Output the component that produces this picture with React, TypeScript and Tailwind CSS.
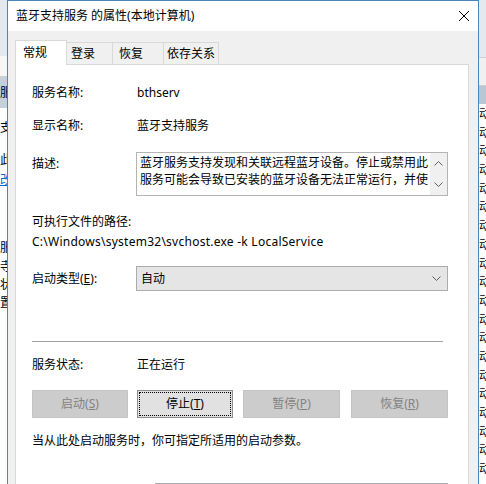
import React from "react";

const FONT = "font-['Noto_Sans','Noto_Sans_CJK_SC',sans-serif]";

function Chevron({ dir, className }: { dir: "up" | "down"; className?: string }) {
  return (
    <svg width="9" height="5" viewBox="0 0 9 5" className={className}>
      {dir === "up" ? (
        <polyline points="0.5,4.5 4.5,0.5 8.5,4.5" fill="none" stroke="#606060" strokeWidth="1" />
      ) : (
        <polyline points="0.5,0.5 4.5,4.5 8.5,0.5" fill="none" stroke="#606060" strokeWidth="1" />
      )}
    </svg>
  );
}

function LeftStrip() {
  return (
    <div className="w-[7px] shrink-0 overflow-hidden flex flex-col bg-white leading-[20px]">
      <div className="h-[56px] bg-[#e4e9ef]" />
      <div className="h-[21px] bg-[#f6f6f6] border-b border-[#cfcfcf]" />
      <div className="h-[31px] bg-[#c4d0dc] leading-[31px] whitespace-nowrap">服</div>
      <div className="h-[10px]" />
      <div className="h-[20px] whitespace-nowrap">支</div>
      <div className="h-[12px]" />
      <div className="h-[20px] whitespace-nowrap">此</div>
      <div className="h-[20px] whitespace-nowrap text-[#0066cc] underline">改</div>
      <div className="h-[48px]" />
      <div className="h-[20px] whitespace-nowrap">服</div>
      <div className="h-[18px] leading-[18px] whitespace-nowrap">寺</div>
      <div className="h-[18px] leading-[18px] whitespace-nowrap">状</div>
      <div className="h-[18px] leading-[18px] whitespace-nowrap">置</div>
    </div>
  );
}

function RightStrip() {
  const rows = Array.from({ length: 20 });
  return (
    <div className="w-[7px] shrink-0 overflow-hidden flex flex-col bg-white">
      <div className="h-[57px] shrink-0 bg-[#e4e9ef]" />
      <div className="h-[29px] shrink-0 bg-[#f0f0f0] border-y border-[#cfcfcf]" />
      <div className="h-[18px] shrink-0 bg-[#b9c6d4]" />
      {rows.map((_, i) => (
        <div key={i} className="h-[18.7px] shrink-0 leading-[19px] whitespace-nowrap">
          动
        </div>
      ))}
    </div>
  );
}

function Label({ children, w = "w-[105px]" }: { children: React.ReactNode; w?: string }) {
  return <span className={`${w} shrink-0`}>{children}</span>;
}

function Btn({
  children,
  disabled,
  focused,
  className = "",
}: {
  children: React.ReactNode;
  disabled?: boolean;
  focused?: boolean;
  className?: string;
}) {
  const base = "h-[28px] flex items-center justify-center border shrink-0";
  const look = disabled
    ? "bg-[#cccccc] border-[#c4c4c4] text-[#838383]"
    : "bg-[#e1e1e1] border-[#8f8f8f] text-black";
  const focus = focused ? "outline outline-1 outline-dotted outline-black outline-offset-[-3px]" : "";
  return <div className={`${base} ${look} ${focus} ${className}`}>{children}</div>;
}

function Panel() {
  return (
    <div className="flex-1 bg-white border-x border-[#d9d9d9] pl-[16px] pt-[18px] flex flex-col">
      <div className="flex h-[20px] items-center">
        <Label>服务名称:</Label>
        <span>bthserv</span>
      </div>
      <div className="flex h-[20px] items-center mt-[13px]">
        <Label>显示名称:</Label>
        <span>蓝牙支持服务</span>
      </div>
      <div className="flex mt-[16px]">
        <span className="w-[104px] shrink-0 pt-[2px] leading-[20px]">描述:</span>
        <div className="w-[312px] h-[44px] border border-[#b4b4b4] bg-white flex">
          <div className="flex-1 pl-[3px] pt-px leading-[17px] overflow-hidden whitespace-nowrap">
            <div>蓝牙服务支持发现和关联远程蓝牙设备。停止或禁用此</div>
            <div>服务可能会导致已安装的蓝牙设备无法正常运行，并使</div>
          </div>
          <div className="w-[17px] bg-[#f0f0f0] flex flex-col items-center justify-between py-[8px]">
            <Chevron dir="up" />
            <Chevron dir="down" />
          </div>
        </div>
      </div>
      <div className="h-[20px] flex items-center mt-[16px]">可执行文件的路径:</div>
      <div className="h-[20px] flex items-center whitespace-nowrap tracking-[0.25px]">
        C:\Windows\system32\svchost.exe -k LocalService
      </div>
      <div className="flex items-center mt-[14px] h-[25px]">
        <span className="w-[104px] shrink-0">
          启动类型(<span className="underline">E</span>):
        </span>
        <div className="w-[312px] h-[25px] bg-[#e5e5e5] border border-[#acacac] flex items-center justify-between pl-[4px] pr-[6px]">
          <span>自动</span>
          <Chevron dir="down" />
        </div>
      </div>
      <div className="mt-[50px] h-px w-[411px] bg-[#a0a0a0]" />
      <div className="flex h-[20px] items-center mt-[13px]">
        <Label>服务状态:</Label>
        <span>正在运行</span>
      </div>
      <div className="flex mt-[15px]">
        <Btn disabled className="w-[96px]">
          启动(<span className="underline">S</span>)
        </Btn>
        <Btn focused className="w-[96px] ml-[9px]">
          停止(<span className="underline">T</span>)
        </Btn>
        <Btn disabled className="w-[97px] ml-[10px]">
          暂停(<span className="underline">P</span>)
        </Btn>
        <Btn disabled className="w-[97px] ml-[11px]">
          恢复(<span className="underline">R</span>)
        </Btn>
      </div>
      <div className="h-[20px] flex items-center mt-[13px] whitespace-nowrap">
        当从此处启动服务时，你可指定所适用的启动参数。
      </div>
      <div className="mt-[32px] ml-[123px] w-[293px] h-[20px] border border-[#abadb3] bg-white shrink-0" />
    </div>
  );
}

function Tabs() {
  return (
    <div className="flex items-end h-[25px]">
      <div className="h-[25px] w-[52px] bg-white border-l border-t border-r border-[#d9d9d9] pl-[7px] leading-[23px] relative">
        常规
      </div>
      <div className="h-[23px] w-[46px] border-t border-r border-b border-[#d9d9d9] pl-[4px] leading-[22px]">登录</div>
      <div className="h-[23px] w-[51px] border-t border-r border-b border-[#d9d9d9] pl-[6px] leading-[22px]">恢复</div>
      <div className="h-[23px] w-[55px] border-t border-r border-b border-[#d9d9d9] pl-[3px] leading-[22px]">依存关系</div>
      <div className="flex-1 h-[23px] border-b border-[#d9d9d9]" />
    </div>
  );
}

function Dialog() {
  return (
    <div className="flex-1 border-x border-t border-[#4a86b8] bg-[#f0f0f0] flex flex-col min-w-0">
      <div className="h-[30px] shrink-0 bg-white flex items-center justify-between pl-[8px] pr-[9px]">
        <span className="whitespace-nowrap">蓝牙支持服务 的属性(本地计算机)</span>
        <svg width="10" height="10" viewBox="0 0 10 10">
          <line x1="0" y1="0" x2="10" y2="10" stroke="#000" strokeWidth="1" />
          <line x1="10" y1="0" x2="0" y2="10" stroke="#000" strokeWidth="1" />
        </svg>
      </div>
      <div className="flex-1 flex flex-col pt-[9px] pl-[7px] pr-[9px]">
        <Tabs />
        <Panel />
      </div>
    </div>
  );
}

export default function App() {
  return (
    <div className={`w-[486px] h-[484px] overflow-hidden flex bg-white text-[12px] text-black ${FONT}`}>
      <LeftStrip />
      <Dialog />
      <RightStrip />
    </div>
  );
}
